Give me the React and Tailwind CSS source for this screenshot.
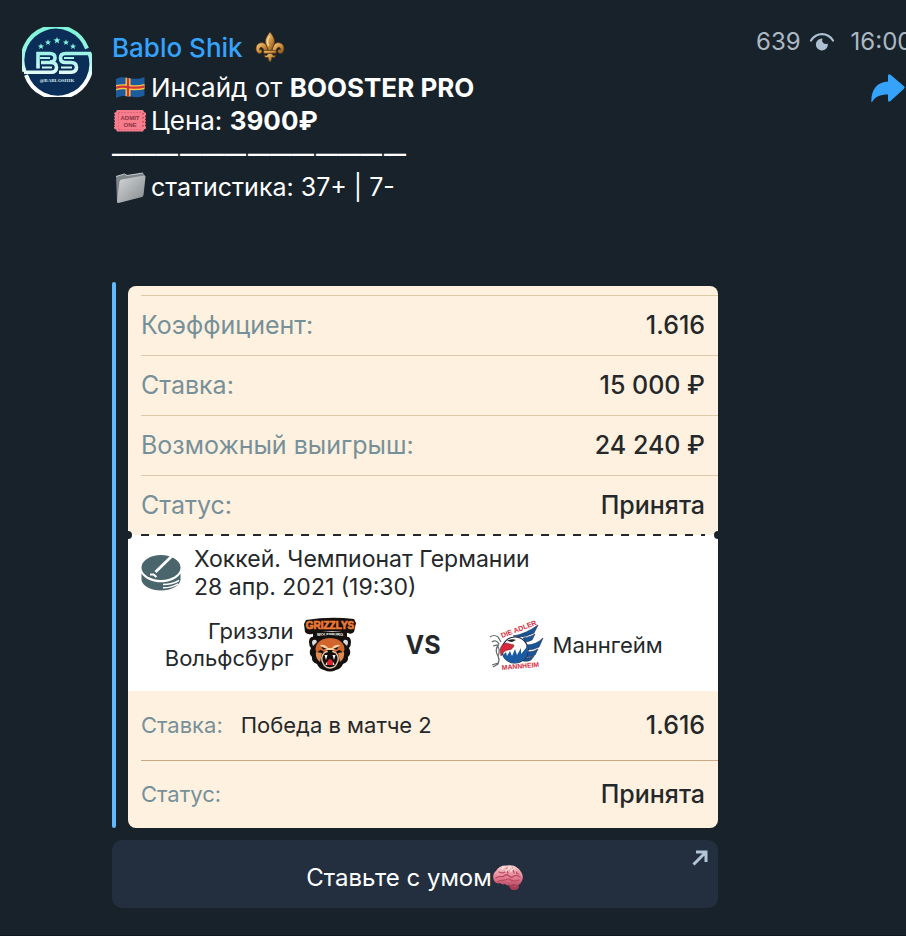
import React from "react";

const coupon = [
  { label: "Коэффициент:", value: "1.616" },
  { label: "Ставка:", value: "15 000 ₽" },
  { label: "Возможный выигрыш:", value: "24 240 ₽" },
  { label: "Статус:", value: "Принята" },
];

const dashes = ["———", "———", "———", "———", "—"];

const Star = ({ x, y, s = 3.2 }) => (
  <path
    transform={`translate(${x} ${y}) scale(${s})`}
    d="M0-1 .26-.34 .95-.31 .41.12 .59.81 0 .42-.59.81-.41.12-.95-.31-.26-.34Z"
  />
);

const Avatar = () => (
  <svg viewBox="0 0 70 70" className="size-[70px] shrink-0" role="img" aria-label="Bablo Shik">
    <defs>
      <linearGradient id="mint" gradientUnits="userSpaceOnUse" x1="0" y1="4" x2="0" y2="62">
        <stop offset="0" stopColor="#7ff5d9" />
        <stop offset=".45" stopColor="#a4f3ea" />
        <stop offset=".85" stopColor="#ffffff" />
      </linearGradient>
    </defs>
    <circle cx="35" cy="35" r="35" fill="#0a2e58" />
    <g fill="none" stroke="url(#mint)">
      <path d="M2.5 44.500A33 33 0 0 1 65 21.500" strokeWidth="4" />
      <path d="M67.500 26A33 33 0 0 1 4 48" strokeWidth="4" />
      <path d="M2 45.200H29q5.500 0 5.500-5 0-4.700-5.500-4.700H19" strokeWidth="3.600" />
      <path d="M16 41.500V26.500H28q5 0 5 4.300t-5 4.300" strokeWidth="3.600" />
      <path d="M69 26.500H43.500q-5 0-5 4.500t5 4.500H49q5.500 0 5.500 4.800T49 45.200H37" strokeWidth="3.600" />
      <path d="M18 31h10M20 40.400h10M42 31h10M39 40.400h11" strokeWidth="2" />
    </g>
    <g fill="#84f2dc">
      <Star x={19} y={19.500} />
      <Star x={26} y={15.500} />
      <Star x={35} y={13.500} s={3.6} />
      <Star x={44} y={15.500} />
      <Star x={51} y={19.500} />
    </g>
    <text x="35" y="55" textAnchor="middle" fontSize="5" fontWeight="700" fill="#cfe5e8" fontFamily="Liberation Serif, serif">
      @BABLOSHIK
    </text>
  </svg>
);

const FleurDeLis = () => (
  <svg viewBox="0 0 30 32" className="h-8 w-[30px]" aria-hidden="true">
    <defs>
      <linearGradient id="gold" x1="0" y1="0" x2="1" y2="1">
        <stop offset="0" stopColor="#f7d58c" />
        <stop offset=".5" stopColor="#cf9440" />
        <stop offset="1" stopColor="#78461b" />
      </linearGradient>
    </defs>
    <g fill="url(#gold)" stroke="#5e3717" strokeWidth=".7" strokeLinejoin="round">
      <path d="M13 20C12 12 8 11 5 12c-4 1-5 6-3 9 1 2 4 2 5 0 .500-2-1-3-2.500-2 0-4 4-4 5 3Z" />
      <path d="M17 20c1-8 5-9 8-8 4 1 5 6 3 9-1 2-4 2-5 0-.500-2 1-3 2.500-2 0-4-4-4-5 3Z" />
      <path d="M15 1c3 4 5 7 4.500 10.500C19 15 17 17 16.500 20h-3C13 17 11 15 10.500 11.500 10 8 12 5 15 1Z" />
      <path d="M13 22h4c0 3 3 3 4 2-1 3-3 3-4 2-.500 3-1 4-2 5-1-1-1.500-2-2-5-1 1-3 1-4-2 1 1 4 1 4-2Z" />
      <rect x="8.500" y="19.500" width="13" height="3" rx="1.500" />
    </g>
    <path d="M14.500 5c-2 3-2.500 6-1 10" fill="none" stroke="#fff0bd" strokeWidth="1" />
  </svg>
);

const AlandFlag = () => (
  <svg viewBox="0 0 32 24" className="h-6 w-8" aria-hidden="true">
    <defs>
      <clipPath id="flag">
        <path d="M2 3C8-.500 12 2 17 2.500S26 3 30.500 1v18.500c-5 2.500-9 1.500-14 1S7 19.500 2 22Z" />
      </clipPath>
    </defs>
    <g clipPath="url(#flag)">
      <path d="M0 0h32v24H0Z" fill="#1c5c9e" />
      <path d="M0 12.500C8 9 12 11 17 11.500s9 .500 15-1.500M14 0v24" fill="none" stroke="#f6c644" strokeWidth="5" />
      <path d="M0 12.500C8 9 12 11 17 11.500s9 .500 15-1.500M14 0v24" fill="none" stroke="#d03338" strokeWidth="2.200" />
    </g>
  </svg>
);

const Ticket = () => (
  <svg viewBox="0 0 34 24" className="h-6 w-[34px]" aria-hidden="true">
    <path
      d="M4 1h26l1 2 2 1v2l-1 1.500 1 1.500-1 1.500 1 1.500-1 1.500 1 1.500-1 1.500 1 1.500v1.500l-2 1-1 2H4l-1-2-2-1v-1.500L2 18l-1-1.500L2 15l-1-1.500L2 12l-1-1.500L2 9 1 7.500 2 6 1 4l2-1Z"
      fill="#f77c8c"
    />
    <path d="M5 3.500h24M5 20.500h24M5.500 4v16" fill="none" stroke="#d5607a" strokeWidth=".8" strokeDasharray="2 1" />
    <path d="M30 4v16" stroke="#b52f45" strokeWidth="1.200" strokeDasharray="1.500 2.500" />
    <g fill="#8a3444" fontFamily="Liberation Sans, sans-serif" fontSize="6" fontWeight="700" textAnchor="middle">
      <text x="17" y="11">ADMIT</text>
      <text x="17" y="17.500">ONE</text>
    </g>
  </svg>
);

const Folder = () => (
  <svg viewBox="0 0 32 32" className="size-8" aria-hidden="true">
    <defs>
      <linearGradient id="folder" x1="0" y1="0" x2="1" y2="1">
        <stop offset="0" stopColor="#d6d9da" />
        <stop offset="1" stopColor="#83898d" />
      </linearGradient>
    </defs>
    <path d="M2 4.500 10.500 2l2.500 1.500L29 1l2 3-3 20L3 29Z" fill="#7e868a" />
    <path d="M2 4.500 10.500 2l2.500 1.500L29 1" fill="none" stroke="#c5cbcd" strokeWidth="1" />
    <path d="M5.500 9.500q.300-1.500 2-1.900L30 3.500q1.700-.300 1.500 1.500L29.500 23q-.200 1.500-1.500 1.900L4.500 31Q2.800 31.300 3 29.500Z" fill="url(#folder)" />
  </svg>
);

const Brain = () => (
  <svg viewBox="0 0 32 28" className="h-7 w-8" aria-hidden="true">
    <defs>
      <linearGradient id="brain" x1="0" y1="0" x2="0" y2="1">
        <stop offset="0" stopColor="#fbd0cf" />
        <stop offset=".6" stopColor="#e77f93" />
        <stop offset="1" stopColor="#b94d66" />
      </linearGradient>
    </defs>
    <path d="M17 20c0 4 2 6 5 6s5-1 5-4l-3-3Z" fill="#a83c55" />
    <path
      d="M3 18C0 14 1 9 4 7 6 3 10 1 15 1.500 22 0 27 4 29 8c3 4 2 9-1 12-2 2-5 1-7 0-2 2-6 2-8 0-2 1-4 0-5-1-2 1-4 0-5-1Z"
      fill="url(#brain)"
    />
    <path
      d="M4 14c3-3 6 0 8-2s4-1 5 0 3 2 5 0 4 0 6 1M6 18c2-3 5-1 7-2s4-2 6 0 5 1 8 0M7 8c2 1 3 2 6 0M15 4c1 2-1 3 1 5M21 4c-1 2 1 3 1 5M25 8c-1 1 0 2 2 2M20 23c2-1 3 0 5-1"
      fill="none"
      stroke="#b44961"
      strokeWidth="1.200"
      strokeLinecap="round"
    />
    <path d="M10 5l2-2M14 7l4-4M19 7l3-3" stroke="#fff0df" strokeWidth="1.300" strokeLinecap="round" />
  </svg>
);

const ViewsIcon = () => (
  <svg viewBox="0 0 26 20" className="h-5 w-[26px]" aria-hidden="true">
    <path d="M2 8.500C5 4 9 2.200 13 2.200S21 4 24 8.500" fill="none" stroke="#acc0d2" strokeWidth="2.200" strokeLinecap="round" />
    <path d="M13.500 6.500a3.800 3.800 0 0 0 5.300 5A6 6 0 1 1 13.500 6.500Z" fill="#acc0d2" />
  </svg>
);

const ShareIcon = () => (
  <svg viewBox="0 0 36 30" className="h-[30px] w-9" aria-hidden="true">
    <path
      d="M18 3q0-3 2.500-1.200L34 13.200q1.500 1.300 0 2.600L20.500 28Q18 29.800 18 27V21.500C10 21.500 5 23.500 2.300 28.800q-.900 1-1-.500C1.300 16.500 7 9 18 8.500Z"
      fill="#35a3fb"
    />
  </svg>
);

const Puck = () => (
  <svg viewBox="0 0 40 38" className="h-[38px] w-10 shrink-0" aria-hidden="true">
    <ellipse cx="20" cy="13.500" rx="19.500" ry="12.500" fill="#4a666c" />
    <path d="M.500 19.500C4 25 12 28.300 20 28.300s16-3 19.500-8.800V26C38.500 32 30 36.500 20 36.500S1.500 32 .500 26Z" fill="#4a666c" />
    <path d="M32 1 14.500 18" stroke="#fff" strokeWidth="2.800" />
    <path d="M9 20.500h3.500l3 2.500" fill="none" stroke="#fff" strokeWidth="2.200" />
    <path d="M22 30.500c6 0 12-1.500 16-4M22 33.800c6 0 11-1.500 15-4" fill="none" stroke="#fff" strokeWidth="1.500" />
  </svg>
);

const GrizzlysLogo = () => (
  <svg viewBox="0 0 54 56" className="h-14 w-[54px] shrink-0" role="img" aria-label="Grizzlys Wolfsburg">
    <path d="M3 3Q27-1 51 2l2 4-2 9q-3 3-6 1Q27 12 9 17q-5 1-7-2L1 7Z" fill="#17110e" />
    <text x="27" y="12" textAnchor="middle" fontFamily="Liberation Sans, sans-serif" fontSize="10" fontWeight="700" fill="#ee7a35" stroke="#ee7a35" strokeWidth=".7">
      GRIZZLYS
    </text>
    <path d="M10 15h34v5H10Z" fill="#17110e" />
    <text x="27" y="19" textAnchor="middle" fontFamily="Liberation Sans, sans-serif" fontSize="4" fontWeight="700" fill="#fff">
      WOLFSBURG
    </text>
    {/* head */}
    <path d="M12 20q-6-1-6 5 0 4 2 6-3 6 1 9-1 5 5 7 2 5 7 6 6 3 12 0 5-1 7-6 6-2 5-7 4-3 1-9 2-2 2-6 0-6-6-5-7-2-15-2t-15 2Z" fill="#14100f" />
    <path d="M9 26q0-4 4-3l1 2-4 4ZM45 26q0-4-4-3l-1 2 4 4Z" fill="#d9dde0" />
    <path d="M27 21q-9 0-13 6-3 5 0 9 2-3 4-3l5 3h8l5-3q2 0 4 3 3-4 0-9-4-6-13-6Z" fill="#d2652c" />
    <path d="M13 35q-1 6 4 10l2-9ZM41 35q1 6-4 10l-2-9Z" fill="#e08a4e" />
    <path d="M17 28q5-1 8 3h4q3-4 8-3l-3 4-4 1v3h-6v-3l-4-1Z" fill="#f9cf9f" />
    <path d="M18 29.500l6 2.500-4 .500ZM36 29.500l-6 2.500 4 .500Z" fill="#14100f" />
    <path d="M21 36q6-4 12 0 4 5 1 10-2 5-7 5t-7-5q-3-5 1-10Z" fill="#14100f" stroke="#efc9ab" strokeWidth="1.300" />
    <path d="M24 33h6l-1.500 3h-3Z" fill="#14100f" />
    <path d="M21.500 38l1.500 5 1.500-5M32.500 38l-1.500 5-1.500-5M22.500 48l1-3 1.500 3M31.500 48l-1-3-1.500 3" fill="#fff" />
    <path d="M24 45q3-6 6 0v3h-6Z" fill="#e0262d" />
  </svg>
);

const AdlerLogo = () => (
  <svg viewBox="0 0 56 56" className="h-14 w-14 shrink-0" role="img" aria-label="Die Adler Mannheim">
    <g fill="#18559b" stroke="#1b2a44" strokeWidth=".6">
      <path d="M24 19Q37 17 49 8l-4 8q-8 4-15 4Z" />
      <path d="M34 21q8-1 12-4l-3 6q-4 2-7 2ZM38 28q9 0 16-7l-4 9q-6 3-11 3ZM38 35q7 0 11-3l-3 6q-4 2-9 2ZM36 41q5 0 9-2l-3 4q-3 2-8 1Z" />
    </g>
    <circle cx="26" cy="33" r="13" fill="#fff" stroke="#1c2c48" strokeWidth="1.200" />
    <path d="M14 38l3-3 1 4 3-5 2 5 3-7 2 6 4-7 0 6 5-6 1-4q3 10-4 16-8 6-16 1-4-3-4-6Z" fill="#1b5ba3" />
    <path d="M11 33q1-6 6-7l8 2q-1 5-6 5-4 0-7 6Z" fill="#d8283b" stroke="#56202a" strokeWidth=".5" />
    <path d="M18 24q5-3 9-1l-4 2Z" fill="#222" />
    <path d="M1 20q4-3 8 0l3 5M3 25q4-3 7 2M4 29l4-1q4 5 1 11 2 4 0 8l-5 3M10 27q-5 6-1 12M9 46l-6 2" fill="none" stroke="#62686c" strokeWidth="1.200" />
    <g fontFamily="Liberation Sans, sans-serif" fontWeight="700" fill="#d8283b">
      <text transform="translate(13 21) rotate(-21)" fontSize="7">
        DIE ADLER
      </text>
      <text transform="translate(13 53) rotate(-5)" fontSize="6.800">
        MANNHEIM
      </text>
    </g>
  </svg>
);

const ArrowOut = () => (
  <svg viewBox="0 0 16 16" className="absolute right-[10px] top-[10px] size-4" fill="none" stroke="#b3c6d8" strokeWidth="3" aria-hidden="true">
    <path d="M4 2h10v10M13.500 2.500 1.500 14.500" />
  </svg>
);

const Coupon = () => (
  <div className="mt-1 flex-1 overflow-hidden rounded-lg bg-[#fff1df] text-[#24282b]">
    <dl className="pt-[9px]">
      {coupon.map((row) => (
        <div key={row.label} className="ml-[13px] flex h-[60px] items-center justify-between border-t border-[#dccba6] pr-[13px] text-[25px]">
          <dt className="text-[#76909a]">{row.label}</dt>
          <dd className="font-medium">{row.value}</dd>
        </div>
      ))}
    </dl>

    <div className="relative bg-white px-[13px] pb-[18px] pt-[10px]">
      {/* perforation between the coupon and the event */}
      <div className="absolute inset-x-[13px] top-0 h-0.5 -translate-y-px bg-[repeating-linear-gradient(90deg,#24282b_0_8px,transparent_8px_16px)]" />
      <div className="absolute -left-1 -top-1 size-2 rounded-full bg-[#18222b]" />
      <div className="absolute -right-1 -top-1 size-2 rounded-full bg-[#18222b]" />

      <div className="flex items-center gap-[13px]">
        <Puck />
        <p className="text-[23px] leading-7">
          Хоккей. Чемпионат Германии
          <br />
          28 апр. 2021 (19:30)
        </p>
      </div>
      <div className="mt-4 grid grid-cols-[1fr_auto_1fr] items-center gap-12 text-[22px] leading-[27px]">
        <div className="flex items-center justify-end gap-[10px] text-right">
          <span>
            Гриззли
            <br />
            Вольфсбург
          </span>
          <GrizzlysLogo />
        </div>
        <span className="text-[25px] font-bold">VS</span>
        <div className="flex items-center gap-2">
          <AdlerLogo />
          <span>Маннгейм</span>
        </div>
      </div>
    </div>

    <dl>
      <div className="ml-[13px] flex h-[69px] items-center pr-[13px]">
        <dt className="text-[22px] text-[#76909a]">Ставка:</dt>
        <dd className="ml-[18px] text-[22px]">Победа в матче 2</dd>
        <dd className="ml-auto text-[25px] font-medium">1.616</dd>
      </div>
      <div className="ml-[13px] flex h-[68px] items-center justify-between border-t border-[#c9a883] pr-[13px]">
        <dt className="text-[22px] text-[#76909a]">Статус:</dt>
        <dd className="text-[25px] font-medium">Принята</dd>
      </div>
    </dl>
  </div>
);

const App = () => {
  return (
    <main className="min-h-screen overflow-x-hidden border-b border-[#10171f] bg-[#18222b] font-['Inter','Liberation_Sans',sans-serif] text-white">
      <article className="flex gap-5 pb-[27px] pl-[22px] pt-[27px]">
        <Avatar />
        <div className="min-w-0 flex-1">
          <header className="flex justify-between">
            <div>
              <div className="flex h-10 items-center gap-3">
                <a href="#" className="text-[26px] font-medium text-[#35a3fb]">
                  Bablo Shik
                </a>
                <FleurDeLis />
              </div>
              <div className="mt-1 text-[26px] leading-[33px]">
                <p className="flex items-center gap-[3px]">
                  <span className="flex w-9 justify-center">
                    <AlandFlag />
                  </span>
                  <span>
                    Инсайд от <b>BOOSTER PRO</b>
                  </span>
                </p>
                <p className="flex items-center gap-[3px]">
                  <span className="flex w-9 justify-center">
                    <Ticket />
                  </span>
                  <span>
                    Цена: <b>3900₽</b>
                  </span>
                </p>
                <p className="flex gap-0.5 font-['Liberation_Sans',sans-serif] text-[22px] font-bold leading-[34px]">
                  {dashes.map((dash, i) => (
                    <span key={i}>{dash}</span>
                  ))}
                </p>
                <p className="flex items-center gap-[3px]">
                  <span className="flex w-9 justify-center">
                    <Folder />
                  </span>
                  <span className="text-[25px]">статистика: 37+ | 7-</span>
                </p>
              </div>
            </div>

            <div className="w-[150px] shrink-0 whitespace-nowrap">
              <div className="flex h-[30px] items-center text-2xl text-[#acb9c3]">
                <span>639</span>
                <span className="ml-2 shrink-0">
                  <ViewsIcon />
                </span>
                <time className="ml-4">16:00</time>
              </div>
              <button type="button" aria-label="Переслать" className="ml-auto mt-4 block">
                <ShareIcon />
              </button>
            </div>
          </header>

          <div className="mt-[78px] max-w-[606px]">
            <div className="flex gap-3">
              <div className="w-1 shrink-0 rounded-full bg-[#64b9fb]" />
              <Coupon />
            </div>
            <button type="button" className="relative mt-3 flex h-[68px] w-full items-center justify-center rounded-[10px] bg-[#232f3e] pt-2 text-[24px]">
              Ставьте с умом
              <Brain />
              <ArrowOut />
            </button>
          </div>
        </div>
      </article>
    </main>
  );
};

export default App;
